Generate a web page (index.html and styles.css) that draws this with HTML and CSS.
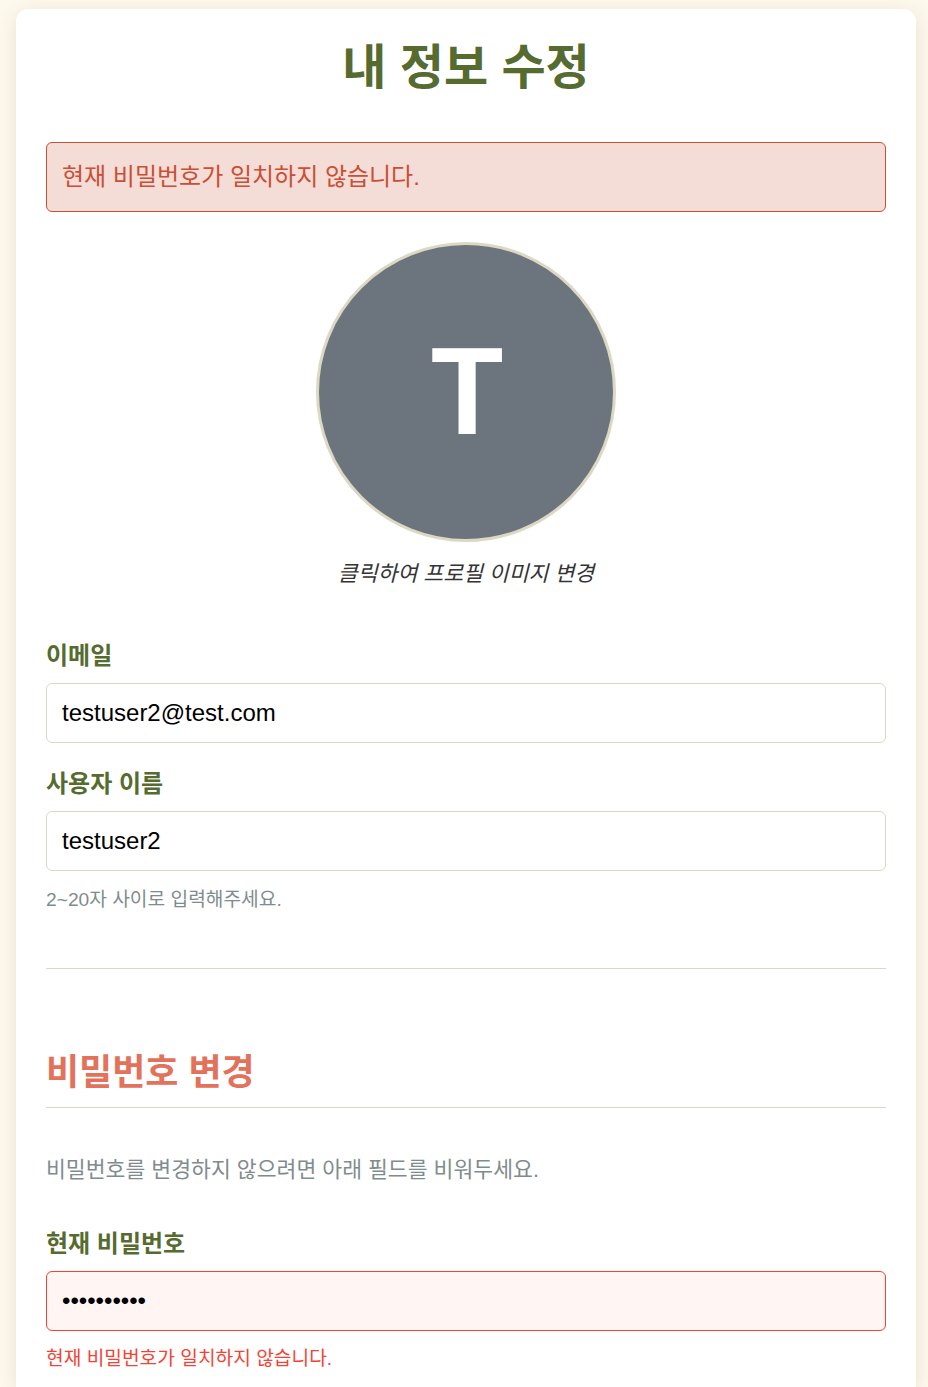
FILE: index.html
```html
<!DOCTYPE html>
<html lang="ko">
<head>
<meta charset="utf-8">
<title>내 정보 수정</title>
<link rel="stylesheet" href="styles.css">
</head>
<body>
<main class="card">
  <h1 class="title">내 정보 수정</h1>
  <div class="alert">현재 비밀번호가 일치하지 않습니다.</div>
  <div class="profile">
    <div class="avatar"><span class="initial">T</span></div>
    <p class="profile-hint">클릭하여 프로필 이미지 변경</p>
  </div>
  <form>
    <div class="field">
      <label class="label" for="email">이메일</label>
      <input class="input" id="email" type="text" value="testuser2@test.com">
    </div>
    <div class="field">
      <label class="label" for="name">사용자 이름</label>
      <input class="input" id="name" type="text" value="testuser2">
      <p class="help">2~20자 사이로 입력해주세요.</p>
    </div>
    <section class="password">
      <h2 class="subtitle">비밀번호 변경</h2>
      <p class="note">비밀번호를 변경하지 않으려면 아래 필드를 비워두세요.</p>
      <div class="field">
        <label class="label" for="current">현재 비밀번호</label>
        <input class="input input-error" id="current" type="password" value="password12">
        <p class="help help-error">현재 비밀번호가 일치하지 않습니다.</p>
      </div>
    </section>
  </form>
</main>
</body>
</html>
```

FILE: styles.css
```css
* { box-sizing: border-box; }
body {
  margin: 0;
  padding: 9px 12px 0 16px;
  height: 1387px;
  overflow: hidden;
  background: #fef9ed;
  font-family: "Liberation Sans", "Noto Sans CJK KR", sans-serif;
  font-size: 24px;
}
h1, h2, p { margin: 0; }
.card {
  width: 900px;
  height: 1378px;
  padding: 20px 30px 0;
  background: #fff;
  border-radius: 12px 12px 0 0;
  box-shadow: 0 4px 20px rgba(85, 85, 47, 0.15);
}
.title {
  height: 76px;
  line-height: 78px;
  text-align: center;
  font-size: 48px;
  color: #556b2f;
}
.alert {
  margin-top: 37px;
  height: 70px;
  padding: 0 15px;
  line-height: 68px;
  border: 1px solid #c94f35;
  border-radius: 6px;
  background: #f4dcd7;
  color: #c94f35;
}
.profile {
  margin-top: 30px;
  display: flex;
  flex-direction: column;
  align-items: center;
}
.avatar {
  width: 300px;
  height: 300px;
  border: 3px solid #ddd8c4;
  border-radius: 50%;
  background: #6c757d;
  color: #fff;
  font-size: 125px;
  font-weight: bold;
  line-height: 292px;
  text-align: center;
}
.initial {
  display: inline-block;
  margin-left: 2px;
  transform: scaleX(0.945);
}
.profile-hint {
  margin-top: 15px;
  height: 33px;
  line-height: 34px;
  font-size: 21.6px;
  font-style: italic;
  color: #333;
}
form { margin-top: 46px; }
.field { margin-bottom: 21px; }
.label {
  display: block;
  height: 47px;
  line-height: 40px;
  font-weight: bold;
  color: #556b2f;
}
.input {
  display: block;
  width: 100%;
  height: 60px;
  padding: 0 15px;
  border: 1px solid #ddd8c4;
  border-radius: 6px;
  background: #fff;
  font: inherit;
  color: #000;
}
.input-error { border-color: #f44336; background: #fff5f3; }
.help {
  margin-top: 12px;
  height: 32px;
  line-height: 34px;
  font-size: 19.2px;
  color: #7f8c8d;
}
.help-error { line-height: 32px; color: #f44336; }
.password {
  margin-top: 53px;
  padding-top: 70px;
  border-top: 1px solid #ddd8c4;
}
.password .field { margin-bottom: 0; }
.subtitle {
  height: 69px;
  line-height: 68px;
  border-bottom: 1px solid #d9d9cd;
  font-size: 36px;
  color: #e2725b;
}
.note {
  margin: 44px 0 38px;
  height: 34px;
  line-height: 36px;
  font-size: 21.6px;
  color: #7f8c8d;
}
```
